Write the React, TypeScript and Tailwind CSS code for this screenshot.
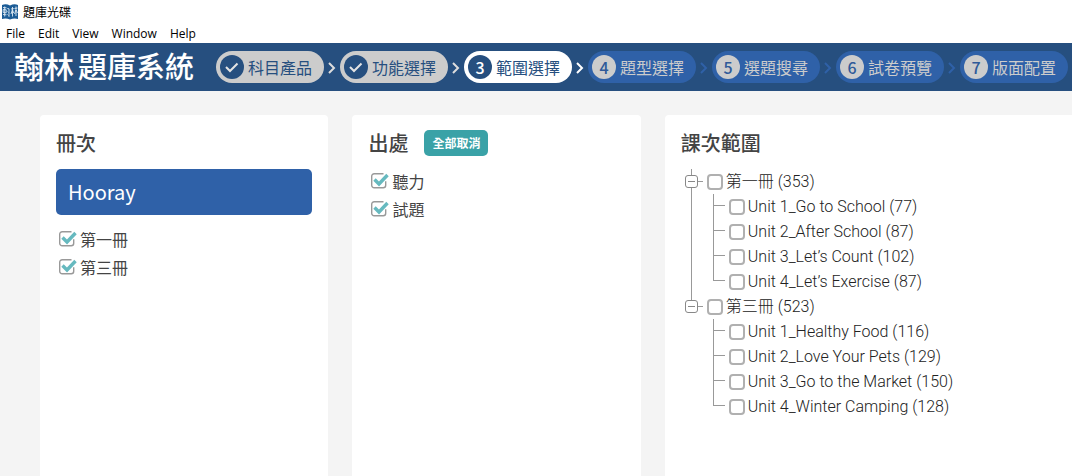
import React, { useState } from 'react';

const STEPS = ['科目產品', '功能選擇', '範圍選擇', '題型選擇', '選題搜尋', '試卷預覽', '版面配置'];
const CURRENT_STEP = 3;

const MENU = ['File', 'Edit', 'View', 'Window', 'Help'];

const TREE = [
    {
        name: '第一冊 (353)',
        units: ['Unit 1_Go to School (77)', 'Unit 2_After School (87)', 'Unit 3_Let’s Count (102)', 'Unit 4_Let’s Exercise (87)'],
    },
    {
        name: '第三冊 (523)',
        units: ['Unit 1_Healthy Food (116)', 'Unit 2_Love Your Pets (129)', 'Unit 3_Go to the Market (150)', 'Unit 4_Winter Camping (128)'],
    },
];

// Open book with the publisher's mark on both pages
const AppIcon: React.FC = () => (
    <svg viewBox="0 0 16 16" className="size-4" aria-hidden="true">
        <path d="M0 1q4-1.500 8 .5Q12-.5 16 1v14q-4-1-8 .5Q4 14 0 15z" fill="#1c5c96" />
        <path
            d="M1 3.500l3.500.3M2.700 2.500v10M1.200 5.500l3 .3v3l-3-.3zM1 10.500l3.500.3M5.300 4.500l1.700.3v8M5.500 7.500l1 1M5.500 10.500l1 1"
            fill="none"
            stroke="#dfeaf3"
            strokeWidth="0.9"
        />
        <path d="M9 5l2.800-.4M10.500 3v9.500M10.300 6L9 10M10.600 6l1 3M12.500 4.500l3-.5M14 2.500V12M13.800 6l-1.200 4M14.200 6l1.200 3" fill="none" stroke="#dfeaf3" strokeWidth="0.9" />
    </svg>
);

const Step: React.FC<{ index: number; label: string }> = ({ index, label }) => {
    const done = index < CURRENT_STEP;
    const current = index === CURRENT_STEP;

    const pill = done ? 'bg-[#cccccc] text-[#264f7f]' : current ? 'bg-white text-[#264f7f]' : 'bg-[#2f61a8] text-[#cccccc]';
    const circle = done || current ? 'bg-[#264f7f] text-white' : 'bg-[#cccccc] text-[#2f5a99]';

    return (
        <button type="button" className={`flex h-8 items-center gap-1 rounded-full pl-1 pr-3 ${pill}`}>
            <span className={`flex size-6 items-center justify-center rounded-full font-medium ${circle}`}>
                {done ? (
                    <svg viewBox="0 0 24 24" className="size-6" fill="none" stroke="#e4e4e4" strokeWidth="2" aria-hidden="true">
                        <path d="M6 12l4 4 7.500-7.500" />
                    </svg>
                ) : (
                    index
                )}
            </span>
            {label}
        </button>
    );
};

const StepArrow: React.FC<{ index: number }> = ({ index }) => {
    const color = index < CURRENT_STEP ? 'text-[#dddddd]' : index === CURRENT_STEP ? 'text-white' : 'text-[#2f61a8]';
    return (
        <svg viewBox="0 0 16 16" className={`size-4 ${color}`} fill="none" stroke="currentColor" strokeWidth="2" aria-hidden="true">
            <path d="M5 4l5 5-5 5" />
        </svg>
    );
};

const TickBox: React.FC<{ label: string }> = ({ label }) => {
    const [checked, setChecked] = useState(true);
    return (
        <label className="flex h-7 items-center gap-1">
            <span className="grid size-5 place-items-center">
                <input
                    type="checkbox"
                    checked={checked}
                    onChange={() => setChecked(!checked)}
                    className="col-start-1 row-start-1 size-5 appearance-none"
                />
                <svg viewBox="0 0 20 20" className="pointer-events-none col-start-1 row-start-1 size-5 overflow-visible" fill="none" aria-hidden="true">
                    <path d="M15.500 2.700H6.200a2.500 2.500 0 0 0-2.500 2.500v9a2.500 2.500 0 0 0 2.500 2.500h9a2.500 2.500 0 0 0 2.500-2.500v-4" stroke="#999999" strokeWidth="1.400" />
                    {checked && <path d="M6.500 8.500l4.500 4.500 8.500-9" stroke="#66b9bf" strokeWidth="3.400" />}
                </svg>
            </span>
            {label}
        </label>
    );
};

const EmptyBox: React.FC<{ label: string }> = ({ label }) => (
    <label className="flex items-center gap-[3px]">
        <input type="checkbox" className="size-4 appearance-none rounded-[4px] border-2 border-[#b0b0b0] bg-white checked:bg-[#66b9bf]" />
        {label}
    </label>
);

const Volume: React.FC<{ name: string; units: string[]; last: boolean }> = ({ name, units, last }) => {
    const [open, setOpen] = useState(true);
    return (
        <li className="flex">
            <div className="flex w-[13px] flex-col items-center">
                <span className="h-[6px] w-px bg-[#999999]" />
                <button
                    type="button"
                    aria-label={name}
                    aria-expanded={open}
                    onClick={() => setOpen(!open)}
                    className="flex size-[13px] items-center justify-center rounded-[3px] border border-[#888888]"
                >
                    <span className="h-px w-[7px] bg-[#888888]" />
                </button>
                {!last && <span className="w-px flex-1 bg-[#999999]" />}
            </div>
            <div>
                <div className="flex h-[25px] items-center gap-1">
                    <span className="h-px w-[5px] bg-[#999999]" />
                    <EmptyBox label={name} />
                </div>
                {open && (
                    <ul className="pl-[15px]">
                        {units.map((unit, i) => (
                            <li key={unit} className="flex h-[25px]">
                                <div className="flex w-3 flex-col">
                                    <span className="h-3 border-b border-l border-[#999999]" />
                                    {i < units.length - 1 && <span className="flex-1 border-l border-[#999999]" />}
                                </div>
                                <div className="flex items-center pl-1">
                                    <EmptyBox label={unit} />
                                </div>
                            </li>
                        ))}
                    </ul>
                )}
            </div>
        </li>
    );
};

const App: React.FC = () => {
    return (
        <div className="flex min-h-screen flex-col overflow-x-hidden bg-[#f4f4f4] font-['Noto_Sans_CJK_TC',sans-serif] text-base text-[#444444]">
            <div className="bg-white text-black">
                <div className="flex h-6 items-center gap-[5px] pl-0.5 text-xs">
                    <AppIcon />
                    <span>題庫光碟</span>
                </div>
                <nav className="flex h-[19px] items-center gap-[13px] pl-1.5 font-['Open_Sans',sans-serif] text-xs">
                    {MENU.map((item) => (
                        <button key={item} type="button">{item}</button>
                    ))}
                </nav>
            </div>

            <header className="flex h-12 items-center bg-[#264f7f] pl-[14px]">
                <h1 className="mr-[22px] flex shrink-0 items-center gap-1 pb-1 text-[29px] leading-none font-medium whitespace-nowrap text-white">
                    <span className="text-[30px]">翰林</span>
                    <span>題庫系統</span>
                </h1>
                <nav className="flex shrink-0 items-center whitespace-nowrap">
                    {STEPS.map((label, i) => (
                        <React.Fragment key={label}>
                            {i > 0 && <StepArrow index={i} />}
                            <Step index={i + 1} label={label} />
                        </React.Fragment>
                    ))}
                </nav>
            </header>

            <main className="grid flex-1 grid-cols-[17fr_17fr_24fr] gap-6 pt-6 pl-10">
                <section className="rounded-t bg-white p-4">
                    <h2 className="text-xl leading-6 font-medium">冊次</h2>
                    <button type="button" className="mt-[14px] mb-[10px] block h-[46px] w-full rounded-[5px] bg-[#2f61a8] px-3 text-left text-xl text-white">
                        Hooray
                    </button>
                    <TickBox label="第一冊" />
                    <TickBox label="第三冊" />
                </section>

                <section className="rounded-t bg-white p-4">
                    <div className="mb-3 flex h-6 items-center gap-4">
                        <h2 className="text-xl leading-6 font-medium">出處</h2>
                        <button type="button" className="h-[26px] rounded-[5px] bg-[#3aa2a7] px-2 text-xs font-bold text-white">全部取消</button>
                    </div>
                    <TickBox label="聽力" />
                    <TickBox label="試題" />
                </section>

                <section className="rounded-tl bg-white p-4">
                    <h2 className="text-xl leading-6 font-medium">課次範圍</h2>
                    <ul className="mt-[14px] pl-1 font-[Roboto,'Noto_Sans_CJK_TC',sans-serif] font-light whitespace-nowrap text-[#222222]">
                        {TREE.map((volume, i) => (
                            <Volume key={volume.name} name={volume.name} units={volume.units} last={i === TREE.length - 1} />
                        ))}
                    </ul>
                </section>
            </main>
        </div>
    );
};

export default App;
